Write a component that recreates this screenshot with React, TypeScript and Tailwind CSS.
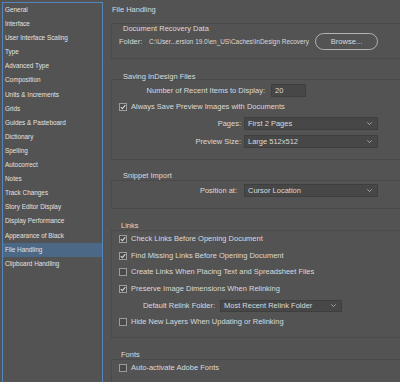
const sideItems = [
  "General",
  "Interface",
  "User Interface Scaling",
  "Type",
  "Advanced Type",
  "Composition",
  "Units & Increments",
  "Grids",
  "Guides & Pasteboard",
  "Dictionary",
  "Spelling",
  "Autocorrect",
  "Notes",
  "Track Changes",
  "Story Editor Display",
  "Display Performance",
  "Appearance of Black",
  "File Handling",
  "Clipboard Handling",
];

function Check({ on }: { on?: boolean }) {
  return (
    <span className="flex h-[8px] w-[8px] shrink-0 items-center justify-center border border-[#9c9c9c] bg-[#4a4a4a]">
      {on && (
        <svg width="6" height="6" viewBox="0 0 6 6" fill="none">
          <path d="M0.8 3.1 L2.4 4.7 L5.3 1.2" stroke="#d8d8d8" strokeWidth="1.1" />
        </svg>
      )}
    </span>
  );
}

function CheckRow({ label, on }: { label: string; on?: boolean }) {
  return (
    <div className="flex h-[16.6px] items-center pl-[7px]">
      <Check on={on} />
      <span className="ml-[4px] leading-[10px]">{label}</span>
    </div>
  );
}

function Select({ value, w }: { value: string; w: string }) {
  return (
    <div
      className={`flex h-full items-center justify-between border border-[#3f3f3f] bg-[#474747] pl-[3px] pr-[5px] ${w}`}
    >
      <span className="leading-[10px]">{value}</span>
      <svg width="5" height="3" viewBox="0 0 5 3" fill="none">
        <path d="M0.3 0.4 L2.5 2.5 L4.7 0.4" stroke="#bdbdbd" strokeWidth="0.8" />
      </svg>
    </div>
  );
}

function Title({ children, pl }: { children: string; pl: string }) {
  return <div className={`relative h-[10px] leading-[10px] ${pl}`}>{children}</div>;
}

export default function App() {
  return (
    <div className="flex h-[382px] w-[400px] overflow-hidden bg-[#535353] font-['Liberation_Sans',Arial,sans-serif] text-[#dadada]">
      <div className="ml-[2px] mt-[2px] w-[101px] shrink-0 border border-b-0 border-[#5585bb]">
        {sideItems.map((item) => (
          <div
            key={item}
            className={`h-[14.1px] pl-[2px] text-[6.4px] leading-[14.1px] text-[#e2e2e2] ${
              item === "File Handling" ? "bg-[#4b6887]" : ""
            }`}
          >
            {item}
          </div>
        ))}
      </div>

      <div className="min-w-0 flex-1 text-[7.5px]">
        <div className="mt-[5px] h-[10px] pl-[9px] leading-[10px]">File Handling</div>

        {/* Document Recovery Data */}
        <div className="ml-[8px] mt-[8px] border border-r-0 border-[#4a4a4a] pb-[8px]">
          <Title pl="pl-[11px]">Document Recovery Data</Title>
          <div className="-mt-px flex h-[17px] items-center pl-[7px]">
            <span className="w-[30px] shrink-0">Folder:</span>
            <span className="w-[166px] shrink-0 whitespace-nowrap text-[6.45px]">
              C:\User...ersion 19.0\en_US\Caches\InDesign Recovery
            </span>
            <div className="flex h-[17px] w-[63px] shrink-0 items-center justify-center rounded-full border border-[#b3b3b3] text-[7.6px]">
              Browse...
            </div>
          </div>
        </div>

        {/* Saving InDesign Files */}
        <div className="ml-[8px] mt-[13px]">
          <Title pl="pl-[12px]">Saving InDesign Files</Title>
          <div className="-mt-[3px] border border-r-0 border-[#4a4a4a] pb-[11px]">
            <div className="mt-[4px] flex h-[13px] items-center">
              <span className="w-[153px] shrink-0 text-right">Number of Recent Items to Display:</span>
              <div className="ml-[6px] flex h-full w-[35px] items-center border border-[#3f3f3f] bg-[#474747] pl-[3px]">
                20
              </div>
            </div>
            <div className="mt-[2px] flex h-[16px] items-center pl-[7px]">
              <Check on />
              <span className="ml-[4px]">Always Save Preview Images with Documents</span>
            </div>
            <div className="mt-[2px] flex h-[13px] items-center">
              <span className="w-[129px] shrink-0 text-right">Pages:</span>
              <div className="ml-[3px] h-full">
                <Select value="First 2 Pages" w="w-[134px]" />
              </div>
            </div>
            <div className="mt-[5px] flex h-[13px] items-center">
              <span className="w-[129px] shrink-0 text-right">Preview Size:</span>
              <div className="ml-[3px] h-full">
                <Select value="Large 512x512" w="w-[134px]" />
              </div>
            </div>
          </div>
        </div>

        {/* Snippet Import */}
        <div className="ml-[8px] mt-[11px]">
          <Title pl="pl-[12px]">Snippet Import</Title>
          <div className="-mt-px border border-r-0 border-[#4a4a4a] pb-[11px]">
            <div className="mt-[3px] flex h-[13px] items-center">
              <span className="w-[125px] shrink-0 text-right">Position at:</span>
              <div className="ml-[7px] h-full">
                <Select value="Cursor Location" w="w-[134px]" />
              </div>
            </div>
          </div>
        </div>

        {/* Links */}
        <div className="ml-[8px] mt-[12px]">
          <Title pl="pl-[10px]">Links</Title>
          <div className="-mt-px border border-r-0 border-[#4a4a4a] pb-[6px]">
            <CheckRow label="Check Links Before Opening Document" on />
            <CheckRow label="Find Missing Links Before Opening Document" on />
            <CheckRow label="Create Links When Placing Text and Spreadsheet Files" />
            <CheckRow label="Preserve Image Dimensions When Relinking" on />
            <div className="flex h-[16.6px] items-center">
              <span className="w-[103px] shrink-0 text-right">Default Relink Folder:</span>
              <div className="ml-[5px] h-[12px]">
                <Select value="Most Recent Relink Folder" w="w-[122px]" />
              </div>
            </div>
            <CheckRow label="Hide New Layers When Updating or Relinking" />
          </div>
        </div>

        {/* Fonts */}
        <div className="ml-[8px] mt-[12px]">
          <Title pl="pl-[10px]">Fonts</Title>
          <div className="-mt-px h-[40px] border border-r-0 border-[#4a4a4a]">
            <CheckRow label="Auto-activate Adobe Fonts" />
          </div>
        </div>
      </div>
    </div>
  );
}
